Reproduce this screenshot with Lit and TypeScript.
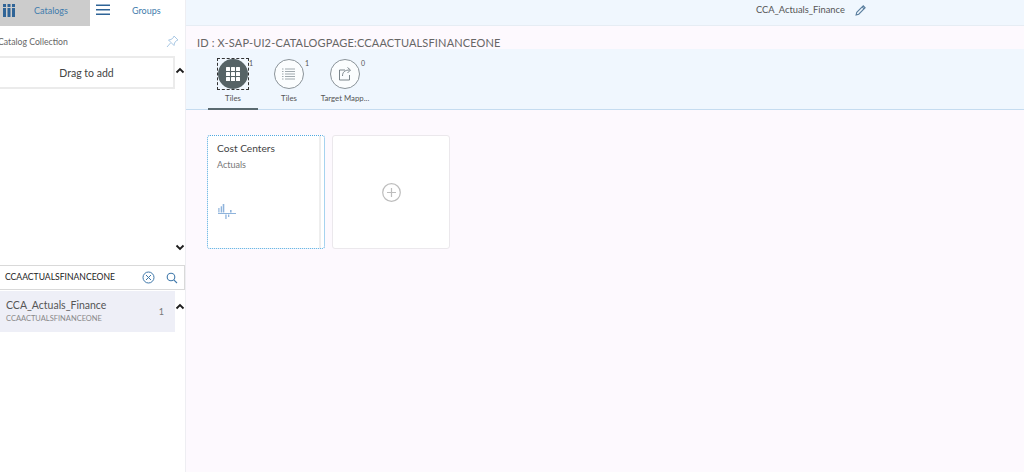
import { LitElement, html, css, svg } from "lit";
import { customElement } from "lit/decorators.js";

const chevUp = html`<svg class="chev" width="10" height="7" viewBox="0 0 10 7"><path d="M1.500 5.500 5 2l3.500 3.500" fill="none" stroke="#1c1c1c" stroke-width="1.800"/></svg>`;
const chevDown = html`<svg class="chev" width="10" height="7" viewBox="0 0 10 7"><path d="M1.500 1.500 5 5l3.500-3.500" fill="none" stroke="#1c1c1c" stroke-width="1.800"/></svg>`;

@customElement("app-root")
export class AppRoot extends LitElement {
  static styles = css`
    :host { display: flex; width: 1024px; height: 472px; overflow: hidden; background: #fdf9fe; font-family: "Lato", "Open Sans", sans-serif; color: #333; }
    .left { width: 186px; flex: none; background: #fff; border-right: 1px solid #eeeef2; box-sizing: border-box; display: flex; flex-direction: column; overflow: hidden; }
    .tabs { height: 26px; display: flex; flex: none; color: #427cac; font-size: 9px; }
    .tab-a { width: 90px; background: #cccccc; display: flex; align-items: center; box-sizing: border-box; padding-bottom: 6px; }
    .tab-a svg { margin-left: 2px; }
    .tab-a span { margin-left: 18px; }
    .tab-b { display: flex; align-items: center; box-sizing: border-box; padding-bottom: 6px; }
    .tab-b svg { margin-left: 6px; }
    .tab-b span { margin-left: 22px; }
    .coll { height: 30px; box-sizing: border-box; flex: none; display: flex; align-items: center; justify-content: space-between; font-size: 8.700px; color: #666; padding: 0 6px 0 0; margin-left: -2px; }
    .drag-row { display: flex; align-items: flex-start; flex: none; }
    .drag { width: 177px; height: 33px; flex: none; margin-left: -2px; box-sizing: border-box; border: 2px solid #ebebeb; background: #fff; display: flex; align-items: center; justify-content: center; font-size: 10.500px; color: #444; }
    .chev { flex: none; }
    .drag-row .chev { margin-top: 11px; }
    .spacer { height: 165px; flex: none; display: flex; align-items: flex-end; justify-content: flex-end; box-sizing: border-box; }
    .spacer .chev { margin-bottom: 3px; }
    .search { margin-top: 11px; height: 25px; width: 185px; flex: none; box-sizing: border-box; border: 1px solid #d9d9d9; border-left: none; display: flex; align-items: center; font-size: 8.600px; color: #222; padding: 0 6px 1px 5px; }
    .search span { flex: 1; }
    .search svg { margin-top: 1px; }
    .search svg + svg { margin-left: 11px; }
    .item-row { display: flex; align-items: flex-start; margin-top: 1px; flex: none; }
    .item { width: 175px; height: 41px; flex: none; background: #eeeff7; box-sizing: border-box; padding: 0 11px 1px 6px; display: flex; justify-content: space-between; align-items: center; }
    .item .t { font-size: 10.500px; color: #555; line-height: 14px; }
    .item .s { font-size: 7.500px; color: #888; line-height: 11px; margin-top: 1px; }
    .item .n { font-size: 9px; color: #777; margin-top: 1px; }
    .item-row .chev { margin-top: 12px; }
    .right { flex: 1; display: flex; flex-direction: column; min-width: 0; }
    .top { height: 26px; flex: none; background: #f0f7fe; border-bottom: 1px solid #e6edf4; box-sizing: border-box; display: flex; align-items: flex-start; font-size: 9.300px; color: #555; padding: 4px 0 0 570px; gap: 10px; }
    .top svg { margin-top: 1px; }
    .idline { height: 23px; flex: none; display: flex; align-items: flex-end; padding: 0 0 0 11px; font-size: 11px; color: #666; letter-spacing: 0.150px; line-height: 13px; }
    .bar { height: 61px; flex: none; background: #f0f7fe; border-bottom: 1px solid #c5dcf0; box-sizing: border-box; display: flex; padding-left: 22px; }
    .t-item { position: relative; width: 50px; margin-right: 6px; display: flex; flex-direction: column; align-items: center; font-size: 7.800px; color: #555; box-sizing: border-box; padding-top: 10px; height: 60px; white-space: nowrap; }
    .t-item.sel { border-bottom: 2px solid #5a6a70; height: 61px; }
    .t-item .lab { margin-top: 4px; line-height: 10px; }
    .circle { width: 30px; height: 30px; box-sizing: border-box; border-radius: 50%; border: 1px solid #8a9399; background: #fbfdfe; display: flex; align-items: center; justify-content: center; }
    .focus { outline: 1px dashed #333; outline-offset: 0; width: 30px; height: 30px; }
    .sel .circle { background: #566366; border: none; }
    .cnt { position: absolute; top: 10px; left: 41px; font-size: 7px; color: #555; line-height: 9px; }
    .content { display: flex; gap: 7px; padding: 25px 0 0 21px; }
    .card { width: 118px; height: 114px; box-sizing: border-box; background: #fff; border-radius: 3px; border: 1px solid #ebe8ec; }
    .first { border: 1px dotted #4fa8e0; position: relative; padding: 5px 9px; }
    .first .strip { position: absolute; right: 3px; top: 0; bottom: 0; width: 2px; background: #eeeeee; }
    .first .ttl { font-size: 10.200px; color: #444; line-height: 14px; }
    .first .sub { font-size: 9px; color: #777; margin-top: 4px; line-height: 11px; }
    .first svg { position: absolute; left: 10px; top: 68px; }
    .add { display: flex; align-items: center; justify-content: center; }
    .add svg { margin-top: 1px; }
  `;

  render() {
    return html`
      <div class="left">
        <div class="tabs">
          <div class="tab-a">
            <svg width="14" height="14" viewBox="0 0 14 14" fill="#2f6497">
              <rect x="1" y="1" width="3" height="3"/><rect x="5.500" y="1" width="3" height="3"/><rect x="10" y="1" width="3" height="3"/>
              <rect x="1" y="5" width="3" height="9"/><rect x="5.500" y="5" width="3" height="9"/><rect x="10" y="5" width="3" height="9"/>
            </svg>
            <span>Catalogs</span>
          </div>
          <div class="tab-b">
            <svg width="14" height="12" viewBox="0 0 14 12" fill="#2f6497"><rect y="0.500" width="14" height="1.500"/><rect y="5" width="14" height="1.500"/><rect y="9.500" width="14" height="1.500"/></svg>
            <span>Groups</span>
          </div>
        </div>
        <div class="coll">
          <span>Catalog Collection</span>
          <svg width="13" height="13" viewBox="0 0 13 13" fill="none" stroke="#a9c8e4" stroke-width="1"><path d="M8 1l4 4-1.500.5L8.500 8 8 10.500 2.500 5 5 4.500 7.500 2.500zM4.500 8 1 12"/></svg>
        </div>
        <div class="drag-row"><div class="drag">Drag to add</div>${chevUp}</div>
        <div class="spacer">${chevDown}</div>
        <div class="search">
          <span>CCAACTUALSFINANCEONE</span>
          <svg width="13" height="13" viewBox="0 0 13 13" fill="none" stroke="#3f78aa" stroke-width="1"><circle cx="6.500" cy="6.500" r="5.500"/><path d="M4 4l5 5M9 4l-5 5"/></svg>
          <svg width="12" height="12" viewBox="0 0 12 12" fill="none" stroke="#3f78aa" stroke-width="1.100"><circle cx="5" cy="5" r="3.800"/><path d="M7.800 7.800 11 11"/></svg>
        </div>
        <div class="item-row">
          <div class="item">
            <div><div class="t">CCA_Actuals_Finance</div><div class="s">CCAACTUALSFINANCEONE</div></div>
            <div class="n">1</div>
          </div>
          ${chevUp}
        </div>
      </div>
      <div class="right">
        <div class="top">
          <span>CCA_Actuals_Finance</span>
          <svg width="11" height="11" viewBox="0 0 10 10" fill="none" stroke="#5b7f9f" stroke-width="1"><path d="M1 9l.6-2.400L7.500.8l1.700 1.700L3.400 8.400zM6.500 1.800l1.700 1.700"/></svg>
        </div>
        <div class="idline">ID : X-SAP-UI2-CATALOGPAGE:CCAACTUALSFINANCEONE</div>
        <div class="bar">
          <div class="t-item sel">
            <div class="focus"><div class="circle">
              <svg width="14" height="14" viewBox="0 0 14 14" fill="#fff">
                ${[0, 5, 10].map((y) => [0, 5, 10].map((x) => svg`<rect x=${x} y=${y} width="4" height="4" rx="0.500"/>`))}
              </svg>
            </div></div>
            <div class="lab">Tiles</div><div class="cnt">1</div>
          </div>
          <div class="t-item">
            <div class="circle">
              <svg width="14" height="13" viewBox="0 0 14 13" stroke="#7a858c" stroke-width="0.700">
                ${[1, 3.500, 6, 8.500, 11].map((y) => svg`<path d="M0 ${y}h1.500M3 ${y}h10"/>`)}
              </svg>
            </div>
            <div class="lab">Tiles</div><div class="cnt">1</div>
          </div>
          <div class="t-item">
            <div class="circle">
              <svg width="16" height="16" viewBox="0 0 16 16" fill="none" stroke="#6d787f" stroke-width="0.900"><path d="M8 4H2.500v10h10V9M5.500 10c0-4 2.500-6 7-6M10.500 1.500 13.500 4l-3 3"/></svg>
            </div>
            <div class="lab">Target Mapp...</div><div class="cnt">0</div>
          </div>
        </div>
        <div class="content">
          <div class="card first">
            <div class="ttl">Cost Centers</div>
            <div class="sub">Actuals</div>
            <div class="strip"></div>
            <svg width="18" height="16" viewBox="0 0 18 16" fill="#8fb4dc">
              <rect x="0" y="9" width="18" height="1"/>
              <rect x="0.300" y="4" width="1.200" height="4.500"/><rect x="2.700" y="2.300" width="1.300" height="6.200"/><rect x="4.700" y="0" width="1.600" height="8.500"/>
              <rect x="12" y="6" width="1.600" height="2.500"/><rect x="7.300" y="10.500" width="1.300" height="4.500"/><rect x="10" y="10.500" width="1.300" height="2.500"/>
            </svg>
          </div>
          <div class="card add">
            <svg width="19" height="19" viewBox="0 0 19 19" fill="none" stroke="#bdbdbd" stroke-width="1.200"><circle cx="9.500" cy="9.500" r="8.800"/><path d="M9.500 5v9M5 9.500h9"/></svg>
          </div>
        </div>
      </div>
    `;
  }
}
